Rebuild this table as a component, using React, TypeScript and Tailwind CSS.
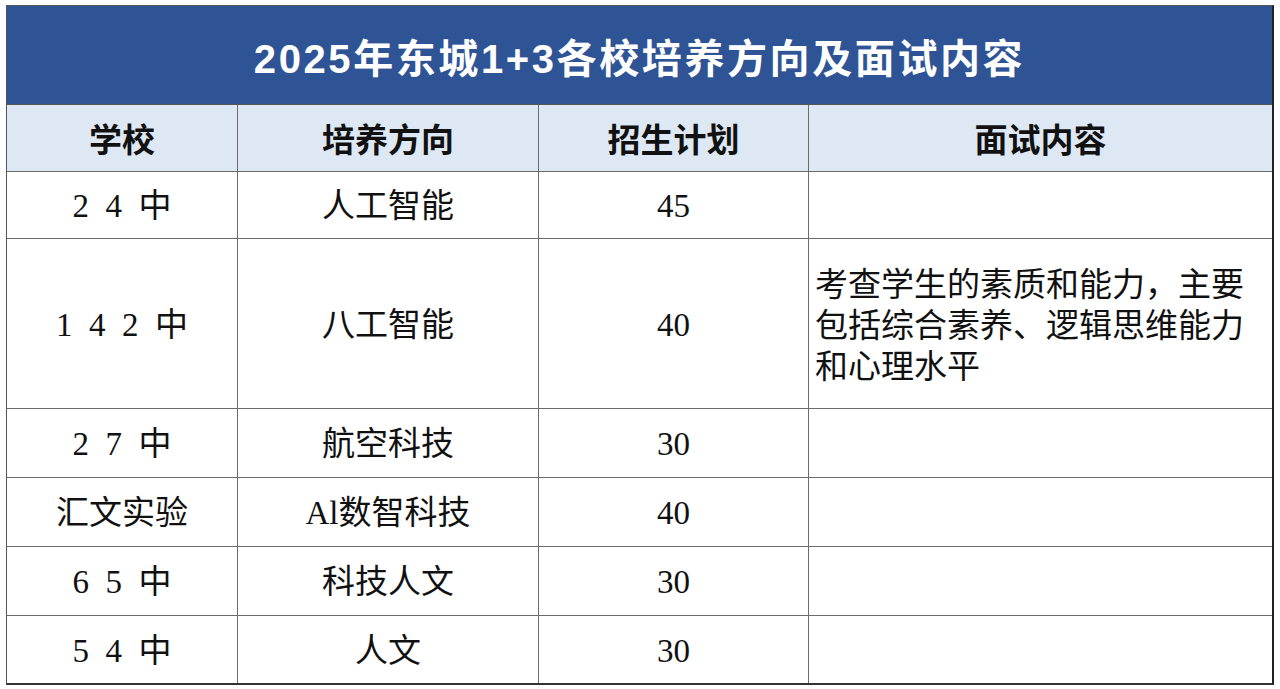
import React from "react";

const serif = "font-['Liberation_Serif','Noto_Sans_CJK_SC',serif]";

function Spaced({ text }: { text: string }) {
  return (
    <span className="inline-flex items-baseline">
      {text.split("").map((c, i) =>
        c === " " ? (
          <span key={i} className="inline-block w-[16.5px]" />
        ) : (
          <span key={i}>{c}</span>
        )
      )}
    </span>
  );
}

type Row = { school: string; dir: string; num: string; h: string; content?: string[] };

const rows: Row[] = [
  { school: "2 4 中", dir: "人工智能", num: "45", h: "h-[67px]" },
  {
    school: "1 4 2 中",
    dir: "八工智能",
    num: "40",
    h: "h-[170px]",
    content: ["考查学生的素质和能力，主要", "包括综合素养、逻辑思维能力", "和心理水平"],
  },
  { school: "2 7 中", dir: "航空科技", num: "30", h: "h-[69px]" },
  { school: "汇文实验", dir: "Al数智科技", num: "40", h: "h-[69px]" },
  { school: "6 5 中", dir: "科技人文", num: "30", h: "h-[69px]" },
  { school: "5 4 中", dir: "人文", num: "30", h: "h-[67px]" },
];

export default function App() {
  return (
    <div className="w-[1280px] h-[689px] bg-white pt-[5px] pl-[6px]">
      <div className="w-[1268px] border-l border-t border-[#555] border-r-2 border-b-2 border-r-[#222] border-b-[#333]">
        <div className="h-[99px] bg-[#2f5496] flex items-center justify-center border-b border-[#555] pt-[8px]">
          <span className="text-white text-[40px] font-bold tracking-[2.6px] font-['Liberation_Sans','Noto_Sans_CJK_SC',sans-serif] leading-none">
            2025年东城1+3各校培养方向及面试内容
          </span>
        </div>
        <div className="grid grid-cols-[231px_301px_270px_1fr]">
          {["学校", "培养方向", "招生计划", "面试内容"].map((t, i) => (
            <div
              key={t}
              className={`h-[67px] bg-[#dde8f4] flex items-center justify-center border-b border-[#6b6b6b] ${
                i < 3 ? "border-r" : ""
              } text-[33px] font-bold text-[#111] font-['Noto_Sans_CJK_SC',sans-serif] leading-none`}
            >
              {t}
            </div>
          ))}
          {rows.map((r, ri) => {
            const last = ri === rows.length - 1;
            const bb = last ? "" : "border-b";
            return (
              <React.Fragment key={ri}>
                <div
                  className={`${r.h} ${bb} border-r border-[#6b6b6b] flex items-center justify-center pt-[3px] text-[33px] text-[#111] ${serif} leading-none`}
                >
                  <Spaced text={r.school} />
                </div>
                <div
                  className={`${r.h} ${bb} border-r border-[#6b6b6b] flex items-center justify-center pt-[3px] text-[33px] text-[#111] ${serif} leading-none`}
                >
                  {r.dir}
                </div>
                <div
                  className={`${r.h} ${bb} border-r border-[#6b6b6b] flex items-center justify-center pt-[3px] text-[33px] text-[#111] ${serif} leading-none`}
                >
                  {r.num}
                </div>
                <div
                  className={`${r.h} ${bb} border-[#6b6b6b] flex flex-col justify-center pl-[6px] pt-[6px] text-[33px] text-[#111] ${serif} leading-[41px]`}
                >
                  {r.content?.map((l, i) => (
                    <div key={i} className="whitespace-nowrap">
                      {l}
                    </div>
                  ))}
                </div>
              </React.Fragment>
            );
          })}
        </div>
      </div>
    </div>
  );
}
